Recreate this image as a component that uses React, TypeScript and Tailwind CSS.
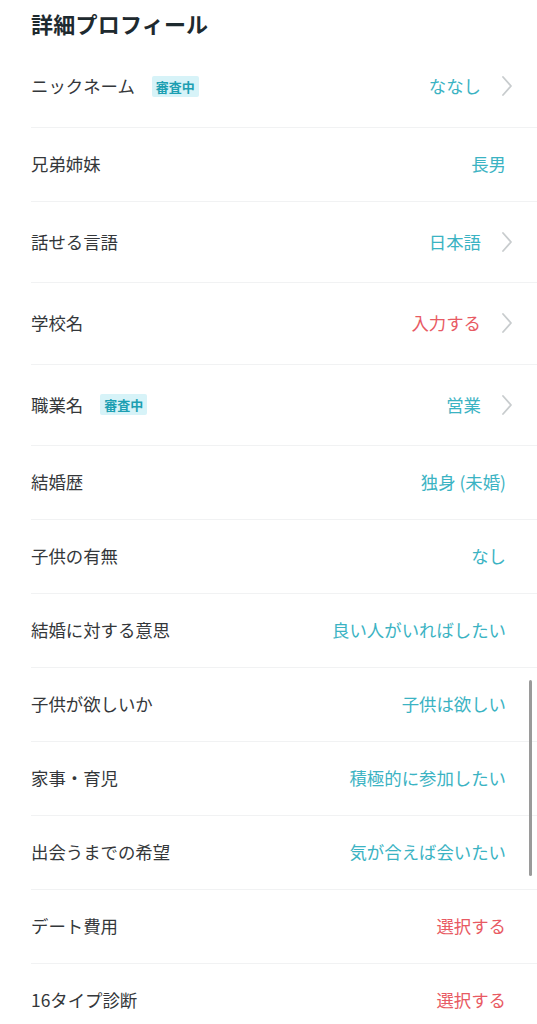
const font = { fontFamily: '"Noto Sans CJK JP", "Noto Sans", sans-serif' };

type Row = {
  label: string;
  value: string;
  tone: "teal" | "red";
  chevron?: boolean;
  badge?: boolean;
};

const rows: Row[] = [
  { label: "ニックネーム", value: "ななし", tone: "teal", chevron: true, badge: true },
  { label: "兄弟姉妹", value: "長男", tone: "teal" },
  { label: "話せる言語", value: "日本語", tone: "teal", chevron: true },
  { label: "学校名", value: "入力する", tone: "red", chevron: true },
  { label: "職業名", value: "営業", tone: "teal", chevron: true, badge: true },
  { label: "結婚歴", value: "独身 (未婚)", tone: "teal" },
  { label: "子供の有無", value: "なし", tone: "teal" },
  { label: "結婚に対する意思", value: "良い人がいればしたい", tone: "teal" },
  { label: "子供が欲しいか", value: "子供は欲しい", tone: "teal" },
  { label: "家事・育児", value: "積極的に参加したい", tone: "teal" },
  { label: "出会うまでの希望", value: "気が合えば会いたい", tone: "teal" },
  { label: "デート費用", value: "選択する", tone: "red" },
  { label: "16タイプ診断", value: "選択する", tone: "red" },
];

function Chevron() {
  return (
    <svg width="12" height="22" viewBox="0 0 12 22" fill="none" className="ml-5 shrink-0">
      <path d="M2 2 L10 11 L2 20" stroke="#c8ccce" strokeWidth="1.8" strokeLinecap="round" strokeLinejoin="round" />
    </svg>
  );
}

export default function App() {
  return (
    <div className="relative w-[537px] h-[1024px] overflow-hidden bg-white" style={font}>
      <h2 className="h-[46px] pl-[31px] flex items-center text-[22px] font-bold text-[#1e2a2f] tracking-[0.01em]">
        詳細プロフィール
      </h2>

      <div className="pl-[31px]">
        {rows.map((row, i) => (
          <div
            key={i}
            className={`flex items-center border-b border-[#f1f2f3] ${
              row.chevron ? "h-[81.5px] pr-[24px]" : "h-[74px] pr-[31px]"
            }`}
          >
            <span className="text-[17.4px] text-[#34373a]">{row.label}</span>
            {row.badge && (
              <span className="ml-[17px] px-[4px] py-[2px] rounded-[2px] bg-[#d7f3f8] text-[13px] font-bold leading-[17px] text-[#1d9fb2]">
                審査中
              </span>
            )}
            <span
              className={`ml-auto text-[17.4px] ${
                row.tone === "red" ? "text-[#e85a63]" : "text-[#3bb3c3]"
              }`}
            >
              {row.value}
            </span>
            {row.chevron && <Chevron />}
          </div>
        ))}
      </div>

      {/* scroll indicator */}
      <div className="absolute right-[5px] top-[680px] w-[3px] h-[196px] rounded-full bg-[#9a9a9a]" />
    </div>
  );
}
